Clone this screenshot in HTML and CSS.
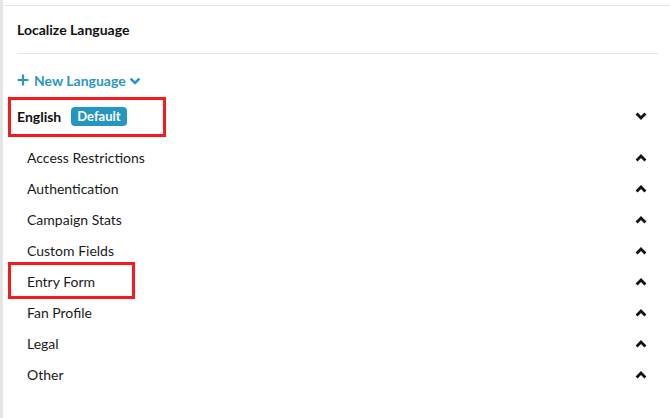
FILE: index.html
```html
<!DOCTYPE html>
<html>
<head>
<meta charset="utf-8">
<link rel="stylesheet" href="styles.css">
</head>
<body>
<div class="page">
  <div class="panel">
    <div class="title">Localize Language</div>
    <div class="new-lang">
      <svg class="plus" width="12" height="12" viewBox="0 0 12 12"><path d="M6 0.5v11M0.5 6h11" stroke="currentColor" stroke-width="2.2" fill="none"/></svg>
      <span>New Language</span>
      <svg class="chev-sm" width="12" height="8" viewBox="0 0 12 8"><polyline points="1.6,1.6 6,6 10.4,1.6" stroke="currentColor" stroke-width="2.6" fill="none"/></svg>
    </div>
    <div class="lang-row">
      <span class="hl hl-english"><span class="lang-name">English</span><span class="badge">Default</span></span>
      <svg class="chev" width="12" height="8" viewBox="0 0 12 8"><polyline points="1.6,1.6 6,6 10.4,1.6" stroke="#111" stroke-width="2.8" fill="none"/></svg>
    </div>
    <ul class="sections">
      <li class="item"><span>Access Restrictions</span><svg class="chev" width="12" height="8" viewBox="0 0 12 8"><polyline points="1.6,6.4 6,2 10.4,6.4" stroke="#111" stroke-width="2.8" fill="none"/></svg></li>
      <li class="item"><span>Authentication</span><svg class="chev" width="12" height="8" viewBox="0 0 12 8"><polyline points="1.6,6.4 6,2 10.4,6.4" stroke="#111" stroke-width="2.8" fill="none"/></svg></li>
      <li class="item"><span>Campaign Stats</span><svg class="chev" width="12" height="8" viewBox="0 0 12 8"><polyline points="1.6,6.4 6,2 10.4,6.4" stroke="#111" stroke-width="2.8" fill="none"/></svg></li>
      <li class="item"><span>Custom Fields</span><svg class="chev" width="12" height="8" viewBox="0 0 12 8"><polyline points="1.6,6.4 6,2 10.4,6.4" stroke="#111" stroke-width="2.8" fill="none"/></svg></li>
      <li class="item"><span class="hl hl-entry">Entry Form</span><svg class="chev" width="12" height="8" viewBox="0 0 12 8"><polyline points="1.6,6.4 6,2 10.4,6.4" stroke="#111" stroke-width="2.8" fill="none"/></svg></li>
      <li class="item"><span>Fan Profile</span><svg class="chev" width="12" height="8" viewBox="0 0 12 8"><polyline points="1.6,6.4 6,2 10.4,6.4" stroke="#111" stroke-width="2.8" fill="none"/></svg></li>
      <li class="item"><span>Legal</span><svg class="chev" width="12" height="8" viewBox="0 0 12 8"><polyline points="1.6,6.4 6,2 10.4,6.4" stroke="#111" stroke-width="2.8" fill="none"/></svg></li>
      <li class="item"><span>Other</span><svg class="chev" width="12" height="8" viewBox="0 0 12 8"><polyline points="1.6,6.4 6,2 10.4,6.4" stroke="#111" stroke-width="2.8" fill="none"/></svg></li>
    </ul>
  </div>
</div>
</body>
</html>
```

FILE: styles.css
```css
html, body {
  margin: 0;
  padding: 0;
  background: #fff;
}
body {
  font-family: Lato, "Open Sans", Arial, sans-serif;
  font-size: 14px;
  color: #1a1a1a;
}
.page {
  border-left: 3px solid #e4e4e4;
  min-height: 418px;
  padding-top: 5px;
  box-sizing: border-box;
}
.panel {
  border-top: 1px solid #e6e6e6;
  padding: 0 12px 0 14px;
}
.title {
  height: 47px;
  line-height: 47px;
  font-weight: 700;
  color: #111;
  border-bottom: 1px solid #e6e6e6;
}
.new-lang {
  margin-top: 16px;
  height: 20px;
  display: flex;
  align-items: center;
  color: #2a97c2;
  font-weight: 700;
}
.new-lang .plus {
  margin-right: 5px;
}
.new-lang .chev-sm {
  margin-left: 3px;
  margin-top: 1px;
}
.lang-row {
  margin-top: 6px;
  height: 40px;
  display: flex;
  align-items: center;
  justify-content: space-between;
  padding-right: 11px;
}
.lang-name {
  font-weight: 700;
  color: #111;
}
.hl {
  position: relative;
}
.hl::after {
  content: "";
  position: absolute;
  border: 3px solid #f7191c;
  box-sizing: border-box;
}
.hl-english {
  display: inline-flex;
  align-items: center;
}
.hl-english::after {
  left: -9px;
  width: 158px;
  top: -10px;
  bottom: -11px;
}
.hl-entry::after {
  left: -19px;
  width: 127px;
  top: -11px;
  bottom: -9px;
}
.badge {
  margin-left: 10px;
  background: #2596be;
  color: #fff;
  font-weight: 700;
  font-size: 13px;
  height: 19px;
  line-height: 19px;
  padding: 0 6px;
  border-radius: 4px;
}
.sections {
  list-style: none;
  margin: 6px 0 0 0;
  padding: 0 11px 0 10px;
}
.item {
  height: 31px;
  display: flex;
  align-items: center;
  justify-content: space-between;
  color: #1a1a1a;
}
.item span {
  line-height: 17px;
}
.chev {
  display: block;
}
```
